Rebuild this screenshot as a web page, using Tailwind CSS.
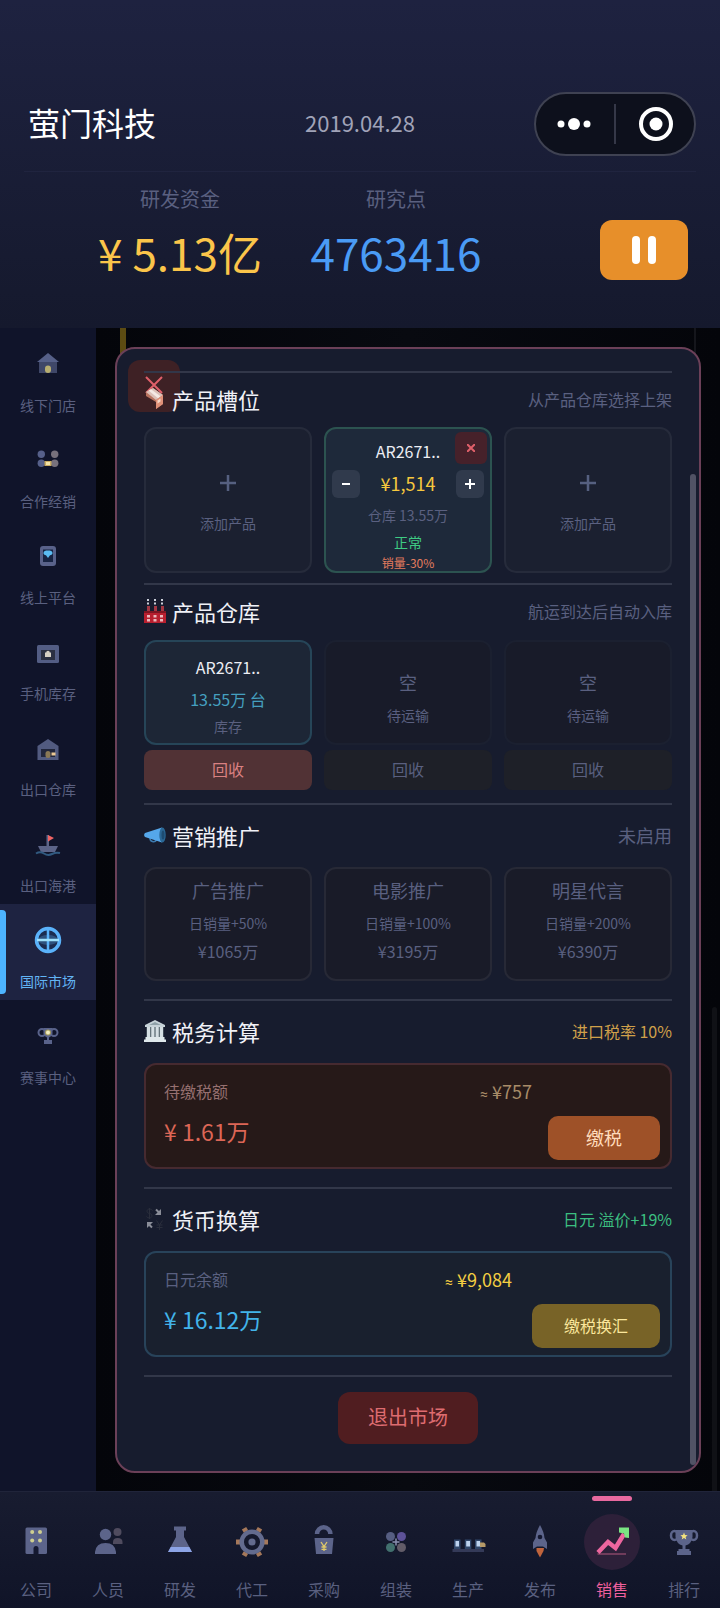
<!DOCTYPE html>
<html lang="zh-CN">
<head>
<meta charset="utf-8">
<meta name="viewport" content="width=device-width, initial-scale=1">
<title>萤门科技</title>
<script src="https://cdn.jsdelivr.net/npm/@tailwindcss/browser@4"></script>
</head>
<body class="bg-[#04050a] font-['Noto_Sans_CJK_SC',sans-serif] text-[#5a6080]">
<div class="flex min-h-screen flex-col">

<header class="bg-linear-to-b from-[#1e2240] to-[#15192d] pt-[92px] pb-12">
  <div class="mx-6 grid grid-cols-[1fr_auto_1fr] items-center border-b border-[#20243f] pb-[15px]">
    <h1 class="pb-1 pl-1 text-[32px] leading-[48px] text-white">萤门科技</h1>
    <time class="pb-1 text-[22px] leading-8 text-[#a0a3b8]">2019.04.28</time>
    <div class="flex h-16 w-[162px] items-center justify-self-end rounded-full border-2 border-[#3f4252] bg-[#0d101c]">
      <button aria-label="更多" class="flex flex-1 justify-center"><svg width="36" height="14" viewBox="0 0 36 14" fill="#fff"><circle cx="4" cy="7" r="3.5"/><circle cx="17" cy="7" r="6"/><circle cx="30" cy="7" r="3.5"/></svg></button>
      <span class="h-10 w-0.5 bg-[#353848]"></span>
      <button aria-label="关闭" class="flex flex-1 justify-center"><svg width="36" height="36" viewBox="0 0 36 36"><circle cx="19" cy="18" r="15" fill="none" stroke="#fff" stroke-width="4"/><circle cx="19" cy="18" r="6.5" fill="#fff"/></svg></button>
    </div>
  </div>
  <div class="flex items-center justify-between pt-3 pr-8 pl-[10vw]">
    <dl class="flex text-center">
      <div class="w-[30vw]"><dt class="text-xl leading-[30px]">研发资金</dt><dd class="mt-2.5 text-[44px] leading-14 text-[#fbc54a]">¥ 5.13亿</dd></div>
      <div class="w-[30vw]"><dt class="text-xl leading-[30px]">研究点</dt><dd class="mt-2.5 text-[44px] leading-14 text-[#4a9bf5]">4763416</dd></div>
    </dl>
    <button aria-label="暂停" class="mt-9 flex h-[60px] w-[88px] items-center justify-center gap-2 rounded-xl bg-[#e78f2a]"><span class="h-7 w-2 rounded bg-white"></span><span class="h-7 w-2 rounded bg-white"></span></button>
  </div>
</header>

<div class="flex flex-1">
  <nav aria-label="侧栏" class="w-24 shrink-0 bg-[#10142a] text-sm leading-5">
    <a href="#" class="flex h-24 flex-col items-center pt-5"><svg width="32" height="32" viewBox="0 0 32 32"><path d="M7 14h18v11H7z" fill="#3f4768"/><path d="M16 5 27 14H5z" fill="#566088"/><rect x="13" y="17.5" width="6" height="7.5" rx="3" fill="#b8ae70"/></svg><span class="mt-[15px]">线下门店</span></a>
    <a href="#" class="flex h-24 flex-col items-center pt-5"><svg width="32" height="32" viewBox="0 0 32 32"><circle cx="9.3" cy="10.3" r="3.7" fill="#56608a"/><circle cx="9.3" cy="19.3" r="3.7" fill="#56608a"/><circle cx="22.7" cy="10.3" r="3.7" fill="#77717c"/><circle cx="22.7" cy="19.3" r="3.7" fill="#77717c"/><path d="M12.500 17h7v5h-7z" fill="#c9ab62"/><path d="M14 18h4v3h-4z" fill="#f3e3a8"/></svg><span class="mt-[15px]">合作经销</span></a>
    <a href="#" class="flex h-24 flex-col items-center pt-5"><svg width="32" height="32" viewBox="0 0 32 32"><rect x="8" y="6" width="16" height="20" rx="3" fill="#59628a"/><path d="M11 9.500h10v12.500H11z" fill="#182443"/><path d="M11.500 13c0-2 2-2.500 4.500-2.500s4.500.5 4.500 2.500c0 1.500-1 2-2.500 2.300L16 18l-2-2.700c-1.500-.3-2.500-.8-2.500-2.300z" fill="#5bbcf2"/></svg><span class="mt-[15px]">线上平台</span></a>
    <a href="#" class="flex h-24 flex-col items-center pt-5"><svg width="32" height="32" viewBox="0 0 32 32"><rect x="5" y="9" width="22" height="18" rx="1.500" fill="#535d84"/><path d="M9 14h14v10H9z" fill="#2b3042"/><path d="M13 16.500h1.200a1.800 1.800 0 0 1 3.600 0H19V21h-6z" fill="#d6d0c4"/></svg><span class="mt-[15px]">手机库存</span></a>
    <a href="#" class="flex h-24 flex-col items-center pt-5"><svg width="32" height="32" viewBox="0 0 32 32"><path d="M16 7 26.500 14v14H5.500V14z" fill="#525b80"/><path d="M9 17h14v8H9z" fill="#22273c"/><rect x="13.500" y="19" width="5" height="7" rx="2.500" fill="#8a7955"/><path d="M19.500 20.500h4v3h-4z" fill="#edca95"/></svg><span class="mt-[15px]">出口仓库</span></a>
    <a href="#" class="flex h-24 flex-col items-center pt-5"><svg width="32" height="32" viewBox="0 0 32 32"><path d="M14.500 7H17v11h-2.500z" fill="#5c6488"/><path d="M16 7l6 3-6 3.500z" fill="#f06464"/><path d="M6 18h20l-3 6H9z" fill="#5c6488"/><path d="M4 25.500q4-2.500 8 0t8 .5 8-1" fill="none" stroke="#315a80" stroke-width="2"/></svg><span class="mt-[15px]">出口海港</span></a>
    <a href="#" aria-current="page" class="relative flex h-24 flex-col items-center bg-[#1e2341] pt-5 text-[#63b4f4]"><span class="absolute top-1.5 bottom-1.5 left-0 w-1.5 rounded-r bg-[#4db4ff]"></span><svg width="32" height="32" viewBox="0 0 32 32"><circle cx="16" cy="16" r="11.500" fill="#1b2c50" stroke="#5ab2fa" stroke-width="3.500"/><ellipse cx="16" cy="16" rx="10" ry="5" fill="#3b6a9c" opacity=".6"/><path d="M16 5v22" stroke="#5ab2fa" stroke-width="2.500"/><path d="M5 16h22" stroke="#9fe0fb" stroke-width="2.500"/></svg><span class="mt-[15px]">国际市场</span></a>
    <a href="#" class="flex h-24 flex-col items-center pt-5"><svg width="32" height="32" viewBox="0 0 32 32"><circle cx="10" cy="12.500" r="3.500" fill="none" stroke="#59628a" stroke-width="2"/><circle cx="22" cy="12.500" r="3.500" fill="none" stroke="#59628a" stroke-width="2"/><path d="M11.500 8h9v6q-1 3-3.500 3.500V20h3v4h-8v-4h3v-2.500Q12.500 17 11.500 14z" fill="#59628a"/><circle cx="16" cy="12.500" r="3" fill="#a59a5e"/><circle cx="16" cy="12.500" r="2" fill="#f1ecbc"/></svg><span class="mt-[15px]">赛事中心</span></a>
  </nav>

  <main class="relative flex-1 bg-linear-to-r from-[#04050a] via-[#080a10] to-[#04050a] p-[19px] pb-[18px]">
    <span class="absolute top-0 left-6 h-8 w-1.5 bg-[#5c4b12]"></span>
    <span class="absolute top-0 right-6 h-8 w-0.5 bg-[#15161c]"></span>
    <span class="absolute right-[3px] bottom-0 h-[484px] w-[5px] rounded-t bg-[#101116]"></span>

    <div role="dialog" aria-label="国际市场" class="relative rounded-[20px] border-2 border-[#6b4058] bg-[#171c2e] px-[27px] pt-[22px] pb-[27px]">
      <button aria-label="关闭窗口" class="absolute top-[11px] left-[11px] flex h-[52px] w-[52px] items-start justify-center rounded-xl bg-[#3e2125] pt-4"><svg width="18" height="18" viewBox="0 0 18 18"><path d="M1 1l16 16M17 1 1 17" stroke="#e0606a" stroke-width="2"/></svg></button>
      <span class="absolute top-[125px] right-[3px] bottom-1.5 w-1.5 rounded-full bg-[#515365]"></span>

      <section class="relative border-t-2 border-[#323749] pb-2.5">
        <div class="flex h-[54px] items-center justify-between pb-[3px]">
          <h2 class="flex items-center gap-1.5 text-[22px] leading-8 text-[#f0f1f7]"><svg width="22" height="22" viewBox="0 0 22 22"><path d="M2 4 9 0l10 7v9l-7 5V14L2 8z" fill="#b8735f"/><path d="M2 4 9 0l10 7-7 5z" fill="#dcc0b8"/><path d="M4.500 2.500 7 1.200l9.500 7-2.500 2z" fill="#f4e9e4"/><path d="M12 12v9l7-5V7z" fill="#e09078"/><path d="M13.500 12.500l3-2v3l-3 2z" fill="#f6d8c8"/></svg>产品槽位</h2>
          <span class="text-base">从产品仓库选择上架</span>
        </div>
        <div class="grid grid-cols-3 gap-3 text-center">
          <button class="flex h-[146px] flex-col items-center rounded-xl border-2 border-[#262b3b] bg-[#1b2030] pt-[46px] text-sm leading-5"><svg width="16" height="16" viewBox="0 0 16 16"><path d="M8 0v16M0 8h16" stroke="#566080" stroke-width="2.500"/></svg><span class="mt-[22px]">添加产品</span></button>
          <div class="relative h-[146px] rounded-xl border-2 border-[#2c5350] bg-[#1e293a] px-1.5 pt-2.5">
            <div class="text-base leading-6 text-[#eceef4]">AR2671..</div>
            <button aria-label="下架" class="absolute top-[3px] right-[3px] flex h-8 w-8 items-center justify-center rounded-md bg-[#46212a]"><svg width="8" height="8" viewBox="0 0 8 8"><path d="M0 0l8 8M8 0 0 8" stroke="#e0606a" stroke-width="2"/></svg></button>
            <div class="mt-[7px] flex items-center justify-between">
              <button aria-label="降价" class="flex h-7 w-7 items-center justify-center rounded-md bg-[#303a4c]"><svg width="10" height="10" viewBox="0 0 10 10"><path d="M1 5h8" stroke="#fff" stroke-width="2"/></svg></button>
              <span class="text-lg leading-6 pb-0.5 text-[#f6c83e]">¥1,514</span>
              <button aria-label="涨价" class="flex h-7 w-7 items-center justify-center rounded-md bg-[#303a4c]"><svg width="10" height="10" viewBox="0 0 10 10"><path d="M0 5h10M5 0v10" stroke="#fff" stroke-width="2"/></svg></button>
            </div>
            <div class="mt-[7px] text-sm leading-5">仓库 13.55万</div>
            <div class="mt-[7px] text-sm leading-5 text-[#3ecb83]">正常</div>
            <div class="mt-[3px] text-xs leading-4 text-[#e57c5e]">销量-30%</div>
          </div>
          <button class="flex h-[146px] flex-col items-center rounded-xl border-2 border-[#262b3b] bg-[#1b2030] pt-[46px] text-sm leading-5"><svg width="16" height="16" viewBox="0 0 16 16"><path d="M8 0v16M0 8h16" stroke="#566080" stroke-width="2.500"/></svg><span class="mt-[22px]">添加产品</span></button>
        </div>
      </section>

      <section class="border-t-2 border-[#323749] pb-[13px]">
        <div class="flex h-[55px] items-center justify-between pb-1">
          <h2 class="flex items-center gap-1.5 text-[22px] leading-8 text-[#f0f1f7]"><svg width="22" height="24" viewBox="0 0 22 24"><path d="M4 0v11M11 0v11M18 0v11" stroke="#c9ced8" stroke-width="2" stroke-dasharray="2 1.500"/><path d="M3 7h3v6H3zM10 7h3v6h-3zM17 7h3v6h-3z" fill="#a33844"/><path d="M0 12h22v12H0z" fill="#b81f2f"/><path d="M0 12h22v2H0z" fill="#7d1522"/><path d="M3 16h3v2.500H3zM9.500 16h3v2.500h-3zM16 16h3v2.500h-3zM3 20h3v2.500H3zM9.500 20h3v2.500h-3zM16 20h3v2.500h-3z" fill="#e9b9bd"/></svg>产品仓库</h2>
          <span class="text-base">航运到达后自动入库</span>
        </div>
        <div class="grid grid-cols-3 gap-3 text-center text-sm leading-5">
          <div>
            <div class="h-[105px] rounded-xl border-2 border-[#264558] bg-[#1d2636] pt-[13px]"><div class="text-base leading-6 text-[#eceef4]">AR2671..</div><div class="mt-2 text-base leading-6 text-[#45a0c0]">13.55万 台</div><div class="mt-[5px]">库存</div></div>
            <button class="mt-[5px] h-10 w-full rounded-lg bg-[#513235] pb-0.5 text-base text-[#da8182]">回收</button>
          </div>
          <div>
            <div class="flex h-[105px] flex-col items-center justify-center rounded-xl border-2 border-[#1b2030] bg-[#181b29] pt-2.5"><div class="text-lg leading-6">空</div><div class="mt-[11px]">待运输</div></div>
            <button disabled class="mt-[5px] h-10 w-full rounded-lg bg-[#1e2028] pb-0.5 text-base">回收</button>
          </div>
          <div>
            <div class="flex h-[105px] flex-col items-center justify-center rounded-xl border-2 border-[#1b2030] bg-[#181b29] pt-2.5"><div class="text-lg leading-6">空</div><div class="mt-[11px]">待运输</div></div>
            <button disabled class="mt-[5px] h-10 w-full rounded-lg bg-[#1e2028] pb-0.5 text-base">回收</button>
          </div>
        </div>
      </section>

      <section class="border-t-2 border-[#323749] pb-[18px]">
        <div class="flex h-[62px] items-center justify-between pb-[3px]">
          <h2 class="flex items-center gap-1.5 text-[22px] leading-8 text-[#f0f1f7]"><svg width="22" height="22" viewBox="0 0 22 22"><path d="M6 14a3.500 3.500 0 0 0 6.500 2" fill="none" stroke="#3c79ad" stroke-width="1.500"/><path d="M1 9 18 3.500v15L1 13a3 3 0 0 1 0-4z" fill="#55a7ea"/><ellipse cx="18.500" cy="11" rx="3.200" ry="7.500" fill="#2b6896"/><ellipse cx="19" cy="11" rx="1.500" ry="4.500" fill="#1d4c72"/></svg>营销推广</h2>
          <span class="text-lg">未启用</span>
        </div>
        <div class="grid grid-cols-3 gap-3 text-center">
          <button class="flex h-[114px] flex-col items-center rounded-xl border-2 border-[#272936] bg-[#191b28] pt-[9px]"><span class="text-lg leading-6">广告推广</span><span class="mt-[11px] text-sm leading-5">日销量+50%</span><span class="mt-2 text-base leading-5">¥1065万</span></button>
          <button class="flex h-[114px] flex-col items-center rounded-xl border-2 border-[#272936] bg-[#191b28] pt-[9px]"><span class="text-lg leading-6">电影推广</span><span class="mt-[11px] text-sm leading-5">日销量+100%</span><span class="mt-2 text-base leading-5">¥3195万</span></button>
          <button class="flex h-[114px] flex-col items-center rounded-xl border-2 border-[#272936] bg-[#191b28] pt-[9px]"><span class="text-lg leading-6">明星代言</span><span class="mt-[11px] text-sm leading-5">日销量+200%</span><span class="mt-2 text-base leading-5">¥6390万</span></button>
        </div>
      </section>

      <section class="border-t-2 border-[#323749] pb-[18px]">
        <div class="flex h-[62px] items-center justify-between pb-[3px]">
          <h2 class="flex items-center gap-1.5 text-[22px] leading-8 text-[#f0f1f7]"><svg width="22" height="22" viewBox="0 0 22 22"><path d="M11 0 21 5v2H1V5z" fill="#c7d3d8"/><path d="M11 2l6 3H5z" fill="#8fa1a8"/><path d="M2.500 7h17v11h-17z" fill="#66757c"/><path d="M3 7h3v11H3zM7.300 7h3v11h-3zM11.700 7h3v11h-3zM16 7h3v11h-3z" fill="#d5dfe3"/><path d="M1.500 17h19v2.500H22V22H0v-2.500h1.500z" fill="#dfe8eb"/></svg>税务计算</h2>
          <span class="text-base text-[#d0a04a]">进口税率 10%</span>
        </div>
        <div class="flex h-[106px] rounded-xl border-2 border-[#462a30] bg-[#261918] pt-3.5 pr-2.5 pb-[7px] pl-[18px]">
          <div class="flex-1"><div class="text-base leading-6 text-[#967070]">待缴税额</div><div class="mt-3 text-[23px] leading-8 text-[#dc6656]">¥ 1.61万</div></div>
          <div class="mr-4 text-lg leading-6 text-[#a88c68]"><span class="font-['Roboto',sans-serif] text-sm">≈</span> ¥757</div>
          <button class="h-11 w-28 self-end rounded-[10px] bg-[#9e5128] pb-0.5 text-lg text-[#ffdcbc]">缴税</button>
        </div>
      </section>

      <section class="border-t-2 border-[#323749] pb-[18px]">
        <div class="flex h-[62px] items-center justify-between pb-[3px]">
          <h2 class="flex items-center gap-1.5 text-[22px] leading-8 text-[#f0f1f7]"><svg width="22" height="22" viewBox="0 0 22 22"><path d="M8.500 2.500Q7.500 1 5.500 1C2.500 1 2 5 5.500 5.500S8.500 10 5.500 10Q3.500 10 2.500 8.500M5.500 0v11M12.500 12.500l3 4.500 3-4.500M15.500 17v5M12.500 17h6M12.500 19.500h6" fill="none" stroke="#2a2e3c"/><path d="M12 1.500l3.500 3.500" fill="none" stroke="#8a8d98" stroke-width="2"/><path d="M17 1v6h-6z" fill="#8a8d98"/><path d="M8 19.500l-3.500-3.500" fill="none" stroke="#8a8d98" stroke-width="2"/><path d="M3 20v-6h6z" fill="#8a8d98"/></svg>货币换算</h2>
          <span class="text-base text-[#3cbf80]">日元 溢价+19%</span>
        </div>
        <div class="flex h-[106px] rounded-xl border-2 border-[#28435a] bg-[#19202e] pt-3.5 pr-2.5 pb-[7px] pl-[18px]">
          <div class="flex-1"><div class="text-base leading-6">日元余额</div><div class="mt-3 text-[23px] leading-8 text-[#42b4ea]">¥ 16.12万</div></div>
          <div class="mr-5 text-lg leading-6 text-[#f4cf42]"><span class="font-['Roboto',sans-serif] text-sm">≈</span> ¥9,084</div>
          <button class="h-11 w-32 self-end rounded-[10px] bg-[#786327] pb-0.5 text-base text-[#fbe79c]">缴税换汇</button>
        </div>
      </section>

      <div class="flex justify-center border-t-2 border-[#323749] pt-[15px]">
        <button class="h-[52px] w-[140px] rounded-xl bg-[#501d20] pb-0.5 text-xl text-[#de6c70]">退出市场</button>
      </div>
    </div>
  </main>
</div>

<nav aria-label="主导航" class="grid grid-cols-10 border-t border-[#20243a] bg-linear-to-b from-[#181c30] to-[#101428] pb-[7px] text-center text-base leading-6">
  <a href="#" class="flex flex-col items-center pt-[29px]"><svg width="40" height="40" viewBox="0 0 40 40"><rect x="9.500" y="6.500" width="21.500" height="26.500" rx="1.500" fill="#5c648a"/><g fill="#cfcf90"><circle cx="16.200" cy="11" r="2"/><circle cx="24" cy="11" r="2"/><circle cx="16.200" cy="19.500" r="2"/><circle cx="24" cy="19.500" r="2"/></g><path d="M17.500 33v-5.500a2.500 2.500 0 0 1 5 0V33z" fill="#141830"/></svg><span class="mt-4">公司</span></a>
  <a href="#" class="flex flex-col items-center pt-[29px]"><svg width="40" height="40" viewBox="0 0 40 40"><g fill="#4f4b5e"><circle cx="29.500" cy="11" r="4"/><path d="M25 23v-2q0-4 4.700-4t4.800 4v2z"/></g><g fill="#5c648a"><circle cx="17.500" cy="13.500" r="5.700"/><path d="M7 33v-2q1-9 10.500-9T28 31v2z"/></g></svg><span class="mt-4">人员</span></a>
  <a href="#" class="flex flex-col items-center pt-[29px]"><svg width="40" height="40" viewBox="0 0 40 40"><path d="M14 5.500h12v4h-2V16l8 15H8l8-15V9.500h-2z" fill="#5c648a"/><path d="M10.700 26h18.600L32 31H8z" fill="#8ca4e6"/></svg><span class="mt-4">研发</span></a>
  <a href="#" class="flex flex-col items-center pt-[29px]"><svg width="40" height="40" viewBox="0 0 40 40"><g fill="#a5785a"><path id="tooth" d="M32 18.500h4v5h-4z"/><use href="#tooth" transform="rotate(60 20 21)"/><use href="#tooth" transform="rotate(120 20 21)"/><use href="#tooth" transform="rotate(180 20 21)"/><use href="#tooth" transform="rotate(240 20 21)"/><use href="#tooth" transform="rotate(300 20 21)"/></g><circle cx="20" cy="21" r="10.300" fill="none" stroke="#636b8e" stroke-width="4.500"/><circle cx="20" cy="21" r="3.600" fill="#636b8e"/></svg><span class="mt-4">代工</span></a>
  <a href="#" class="flex flex-col items-center pt-[29px]"><svg width="40" height="40" viewBox="0 0 40 40"><path d="M13 13a6.700 6.700 0 0 1 13.400 0" fill="none" stroke="#5c648a" stroke-width="4.500"/><path d="M10.500 17h19L28 33H12z" fill="#5c648a"/><path d="M17 21l3 4.500 3-4.500M20 25v5M17.500 26h5M17.500 28.300h5" fill="none" stroke="#dfc96a" stroke-width="1.300"/></svg><span class="mt-4">采购</span></a>
  <a href="#" class="flex flex-col items-center pt-[29px]"><svg width="40" height="40" viewBox="0 0 40 40"><circle cx="14.500" cy="15.500" r="4.500" fill="#565e82"/><circle cx="25.500" cy="15.500" r="4.500" fill="#5d5298"/><circle cx="14.500" cy="26.500" r="4.500" fill="#42706e"/><circle cx="25.500" cy="26.500" r="4.500" fill="#625c68"/><path d="M20 17.500v7M16.500 21h7" stroke="#8a90b0" stroke-width="1.500"/></svg><span class="mt-4">组装</span></a>
  <a href="#" class="flex flex-col items-center pt-[29px]"><svg width="40" height="40" viewBox="0 0 40 40"><path d="M4.500 28h31.500v3H4.500z" fill="#343a58"/><path d="M6 18.500h6.500V28H6zM16.800 18.500h6.500V28h-6.500zM27 18.500h6.500V28H27z" fill="#30476a"/><path d="M7.500 20H11v5.500H7.500zM18.200 20H22v5.500h-3.800zM28.500 20H32v5.500h-3.500z" fill="#bcd2ee"/><path d="M32 21.500h4l1.500 1.500v3H32z" fill="#b59a68"/></svg><span class="mt-4">生产</span></a>
  <a href="#" class="flex flex-col items-center pt-[29px]"><svg width="40" height="40" viewBox="0 0 40 40"><path d="M16.500 27h7.500l-.5 3-3.500 6.500-3.500-6.500z" fill="#c0643c"/><path d="M20 4q4 7 4.500 13l2.500 4.500V28l-4-2.500h-6L13 28v-6.500l2.500-4.500Q16 11 20 4z" fill="#5c648a"/><circle cx="20" cy="16" r="2.300" fill="#141830"/></svg><span class="mt-4">发布</span></a>
  <a href="#" aria-current="page" class="relative flex flex-col items-center pt-[22px] text-[#f0609e]"><span class="absolute top-1 h-[5px] w-10 rounded-sm bg-[#e8699f]"></span><span class="flex h-14 w-14 items-center justify-center rounded-full bg-[#2d2039]"><svg width="40" height="40" viewBox="0 0 40 40"><path d="M5.500 32h28.500" stroke="#7d4262" stroke-width="1.700"/><path d="M6 30.500 16 20l7.500 6L32 12" fill="none" stroke="#ec669e" stroke-width="4.500"/><path d="M27 5.500h10V16l-4-.5-1-4-5-1z" fill="#7be482"/></svg></span><span class="mt-[7px]">销售</span></a>
  <a href="#" class="flex flex-col items-center pt-[29px]"><svg width="40" height="40" viewBox="0 0 40 40"><ellipse cx="10.500" cy="14.500" rx="3.500" ry="4.500" fill="none" stroke="#5c648a" stroke-width="2.500"/><ellipse cx="29.500" cy="14.500" rx="3.500" ry="4.500" fill="none" stroke="#5c648a" stroke-width="2.500"/><path d="M11.500 9h17v7q-1 7-7 8.500v3.500h4v2h1.500v4H13v-4h1.500v-2h4v-3.500q-6-1.500-7-8.500z" fill="#5c648a"/><path d="m20 11.500 1 2.600 2.600.1-2 1.700.7 2.600-2.300-1.500-2.300 1.500.7-2.600-2-1.700 2.600-.1z" fill="#f3e27e"/></svg><span class="mt-4">排行</span></a>
</nav>
</div>
</body>
</html>
